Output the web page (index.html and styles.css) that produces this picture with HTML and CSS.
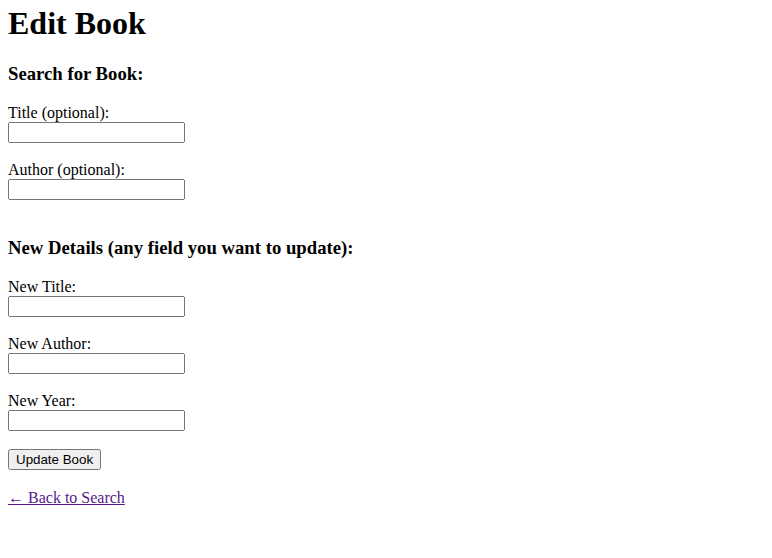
FILE: index.html
```html
<!DOCTYPE html>
<html>
<head>
<meta charset="utf-8">
<title>Edit Book</title>
<link rel="stylesheet" href="styles.css">
</head>
<body>
<h1 class="page-title">Edit Book</h1>
<form class="edit-form">
<h3>Search for Book:</h3>
<label>Title (optional):</label><br>
<input type="text" class="field"><br><br>
<label>Author (optional):</label><br>
<input type="text" class="field"><br><br>
<h3>New Details (any field you want to update):</h3>
<label>New Title:</label><br>
<input type="text" class="field"><br><br>
<label>New Author:</label><br>
<input type="text" class="field"><br><br>
<label>New Year:</label><br>
<input type="text" class="field"><br><br>
<button type="submit" class="btn">Update Book</button>
</form>
<p class="back"><a href="#" class="back-link">← Back to Search</a></p>
</body>
</html>
```
FILE: styles.css
```css
body {
  margin: 5px 8px 8px;
  font-family: "Liberation Serif", serif;
  font-size: 16px;
  color: #000;
  background: #fff;
}
.page-title {
  margin-top: 0;
}
.field, .btn {
  font-family: "Liberation Sans", sans-serif;
  font-size: 13.333px;
}
.field {
  box-sizing: border-box;
  width: 177px;
  height: 21px;
}
.btn {
  box-sizing: border-box;
  height: 21px;
}
.back {
  margin-top: 19px;
}
.back-link {
  color: #551a8b;
}
```
